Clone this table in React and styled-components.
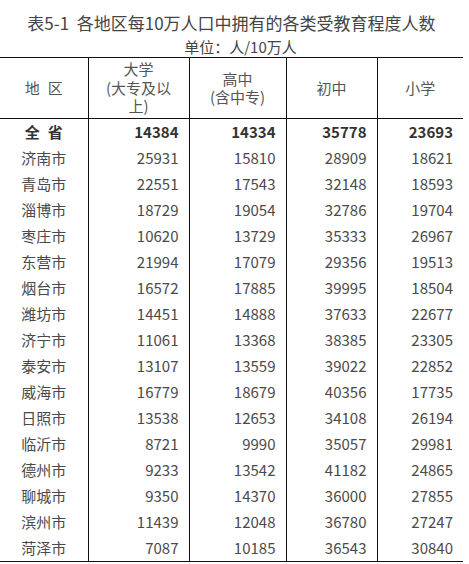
import React from "react";
import styled, { createGlobalStyle } from "styled-components";

const GlobalStyle = createGlobalStyle`
    body {
        margin: 0;
        background: #fff;
        font-family: "Noto Sans CJK SC", "Noto Sans", sans-serif;
        color: #444;
    }
`;

const Page = styled.div`
    width: 469px;
    padding-top: 11px;
`;

const Title = styled.h1`
    margin: 0;
    width: 463px;
    text-align: center;
    font-size: 17px;
    line-height: 24px;
    font-weight: normal;
    color: #444;
    white-space: pre;
`;

const Unit = styled.div`
    margin: 2px 0 0;
    width: 463px;
    padding-left: 18px;
    box-sizing: border-box;
    text-align: center;
    font-size: 15px;
    line-height: 20px;
    color: #444;
`;

const Table = styled.table`
    width: 463px;
    border-collapse: collapse;
    table-layout: fixed;
    font-size: 15px;
    color: #4a4a4a;
`;

const HeadCell = styled.th`
    height: 60px;
    padding: 0;
    font-weight: normal;
    line-height: 18.5px;
    text-align: center;
    color: #555;
    border-top: 1px solid #111;
    border-bottom: 1px solid #111;
    & + & {
        border-left: 1px solid #111;
    }
`;

const Spread = styled.span`
    letter-spacing: 8px;
    margin-right: -8px;
`;

const Row = styled.tr`
    height: 26px;
    font-weight: ${props => props.total ? 'bold' : 'normal'};
    color: ${props => props.total ? '#333' : '#4a4a4a'};
    &:last-child td {
        border-bottom: 1px solid #111;
    }
`;

const Name = styled.td`
    padding: 0;
    text-align: center;
    line-height: 26px;
`;

const Num = styled.td`
    padding: 0 10px 0 0;
    text-align: right;
    line-height: 26px;
    border-left: 1px solid #111;
`;

const rows = [
    ["全省", 14384, 14334, 35778, 23693],
    ["济南市", 25931, 15810, 28909, 18621],
    ["青岛市", 22551, 17543, 32148, 18593],
    ["淄博市", 18729, 19054, 32786, 19704],
    ["枣庄市", 10620, 13729, 35333, 26967],
    ["东营市", 21994, 17079, 29356, 19513],
    ["烟台市", 16572, 17885, 39995, 18504],
    ["潍坊市", 14451, 14888, 37633, 22677],
    ["济宁市", 11061, 13368, 38385, 23305],
    ["泰安市", 13107, 13559, 39022, 22852],
    ["威海市", 16779, 18679, 40356, 17735],
    ["日照市", 13538, 12653, 34108, 26194],
    ["临沂市", 8721, 9990, 35057, 29981],
    ["德州市", 9233, 13542, 41182, 24865],
    ["聊城市", 9350, 14370, 36000, 27855],
    ["滨州市", 11439, 12048, 36780, 27247],
    ["菏泽市", 7087, 10185, 36543, 30840],
];

export default function App() {
    return (
        <Page>
            <GlobalStyle />
            <Title>{"表5-1  各地区每10万人口中拥有的各类受教育程度人数"}</Title>
            <Unit>单位：人/10万人</Unit>
            <Table>
                <colgroup>
                    <col style={{ width: 88 }} />
                    <col style={{ width: 101 }} />
                    <col style={{ width: 97 }} />
                    <col style={{ width: 91 }} />
                    <col style={{ width: 86 }} />
                </colgroup>
                <thead>
                    <tr>
                        <HeadCell><Spread>地区</Spread></HeadCell>
                        <HeadCell>大学<br />(大专及以<br />上)</HeadCell>
                        <HeadCell>高中<br />(含中专)</HeadCell>
                        <HeadCell>初中</HeadCell>
                        <HeadCell>小学</HeadCell>
                    </tr>
                </thead>
                <tbody>
                    {rows.map((r, i) => (
                        <Row key={i} total={i === 0}>
                            <Name>{i === 0 ? <Spread>{r[0]}</Spread> : r[0]}</Name>
                            <Num>{r[1]}</Num>
                            <Num>{r[2]}</Num>
                            <Num>{r[3]}</Num>
                            <Num>{r[4]}</Num>
                        </Row>
                    ))}
                </tbody>
            </Table>
        </Page>
    );
}
